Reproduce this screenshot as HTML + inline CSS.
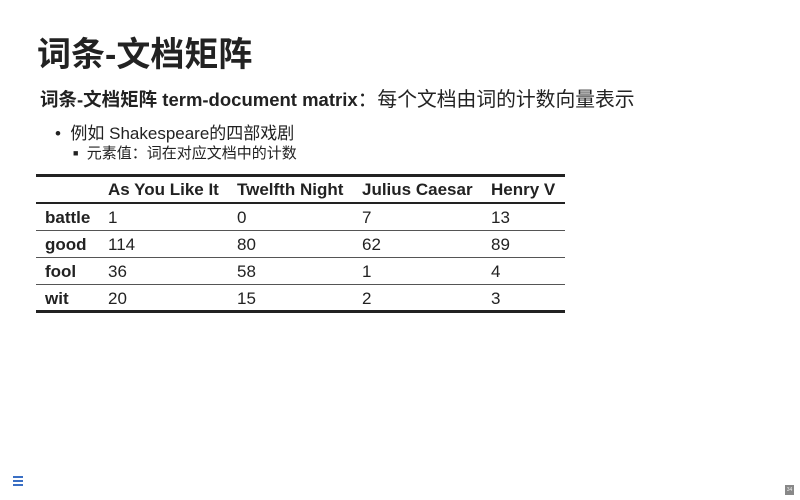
<!DOCTYPE html>
<html><head><meta charset="utf-8"><style>
body{margin:0;width:800px;height:500px;background:#fff;position:relative;overflow:hidden;font-family:"Liberation Sans","Noto Sans CJK SC",sans-serif;color:#222}
.a{position:absolute;white-space:nowrap}
.l{position:absolute;left:36px;width:529px;background:#222}
.c{position:absolute;font-size:17px;white-space:nowrap}
</style></head><body>
<div class="a" style="left:37px;top:27px;font-size:34px;font-weight:bold">词条-文档矩阵</div>
<div class="a" style="left:40px;top:83px;font-size:18.5px;font-weight:bold">词条-文档矩阵 term-document matrix<span style="font-weight:normal;font-size:19.8px">：每个文档由词的计数向量表示</span></div>
<div class="a" style="left:55px;top:119px;font-size:17px">•&nbsp; 例如 Shakespeare的四部戏剧</div>
<div class="a" style="left:73px;top:142px;font-size:15px"><span style="font-size:9px;vertical-align:2px">■</span>&nbsp; 元素值：词在对应文档中的计数</div>
<div class="l" style="top:174px;height:3px"></div>
<div class="l" style="top:202px;height:2px"></div>
<div class="l" style="top:230px;height:1px;background:#555"></div>
<div class="l" style="top:257px;height:1px;background:#555"></div>
<div class="l" style="top:284px;height:1px;background:#555"></div>
<div class="l" style="top:310px;height:3px"></div>
<div class="c" style="top:180px;left:108px;font-weight:bold">As You Like It</div>
<div class="c" style="top:180px;left:237px;font-weight:bold">Twelfth Night</div>
<div class="c" style="top:180px;left:362px;font-weight:bold">Julius Caesar</div>
<div class="c" style="top:180px;left:491px;font-weight:bold">Henry V</div>
<div class="c" style="top:208px;left:45px;font-weight:bold">battle</div>
<div class="c" style="top:208px;left:108px">1</div><div class="c" style="top:208px;left:237px">0</div><div class="c" style="top:208px;left:362px">7</div><div class="c" style="top:208px;left:491px">13</div>
<div class="c" style="top:235px;left:45px;font-weight:bold">good</div>
<div class="c" style="top:235px;left:108px">114</div><div class="c" style="top:235px;left:237px">80</div><div class="c" style="top:235px;left:362px">62</div><div class="c" style="top:235px;left:491px">89</div>
<div class="c" style="top:262px;left:45px;font-weight:bold">fool</div>
<div class="c" style="top:262px;left:108px">36</div><div class="c" style="top:262px;left:237px">58</div><div class="c" style="top:262px;left:362px">1</div><div class="c" style="top:262px;left:491px">4</div>
<div class="c" style="top:289px;left:45px;font-weight:bold">wit</div>
<div class="c" style="top:289px;left:108px">20</div><div class="c" style="top:289px;left:237px">15</div><div class="c" style="top:289px;left:362px">2</div><div class="c" style="top:289px;left:491px">3</div>
<div style="position:absolute;left:13px;top:476px;width:10px">
<div style="height:2px;background:#3a6fc4;margin-bottom:2px"></div><div style="height:2px;background:#3a6fc4;margin-bottom:2px"></div><div style="height:2px;background:#3a6fc4"></div></div>
<div style="position:absolute;left:785px;top:485px;width:9px;height:10px;background:#888;color:#eee;font-size:5px;text-align:center;line-height:10px">34</div>
</body></html>
